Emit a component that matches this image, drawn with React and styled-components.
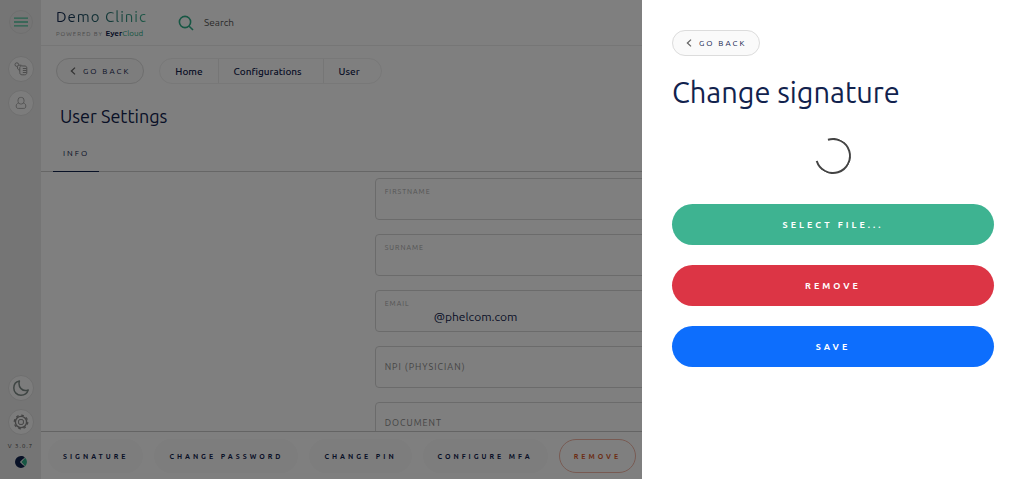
import React from 'react'
import styled, { createGlobalStyle } from 'styled-components'

const fields = [
  { id: 'firstname', label: 'FIRSTNAME', floating: true },
  { id: 'surname', label: 'SURNAME', floating: true },
  { id: 'email', label: 'EMAIL', floating: true, value: '@phelcom.com' },
  { id: 'npi', label: 'NPI (PHYSICIAN)' },
  { id: 'document', label: 'DOCUMENT' },
]

const actions = ['SIGNATURE', 'CHANGE PASSWORD', 'CHANGE PIN', 'CONFIGURE MFA']

const BackIcon = () => (
  <svg width="6" height="8" viewBox="0 0 6 8" fill="none" stroke="#666" strokeWidth="1.3" aria-hidden="true">
    <path d="M5 0.6 L1.4 4 L5 7.4" />
  </svg>
)

const SearchIcon = () => (
  <svg width="16" height="16" viewBox="0 0 16 16" fill="none" stroke="#2fae88" strokeWidth="1.6" aria-hidden="true">
    <circle cx="7" cy="7" r="5.6" />
    <path d="M11.2 11.2 L15 15" />
  </svg>
)

const MenuIcon = () => (
  <svg width="14" height="10" viewBox="0 0 14 10" stroke="#4fc59d" strokeWidth="1.3" aria-hidden="true">
    <path d="M0 1.2 H14 M0 5 H14 M0 8.8 H14" />
  </svg>
)

const ExamIcon = () => (
  <svg width="14" height="14" viewBox="0 0 14 14" fill="none" stroke="#999" strokeWidth="1" aria-hidden="true">
    <circle cx="2.8" cy="2.6" r="1.8" />
    <path d="M4.8 3.2 H7.4 M3.4 4.6 C3.4 7 4 8 5.8 8" />
    <path d="M5.8 5.6 C5.8 4 7 3.6 9 4 H11 C12.4 4.2 12.8 5 12.8 6 V10.6 C12.8 12 12 12.8 10.6 12.8 H8.2 C6.6 12.8 5.8 12 5.8 10.6 Z" />
    <path d="M8.8 6.5 H12.6 M8.8 8.5 H12.6 M8.8 10.5 H12.6" />
  </svg>
)

const UserIcon = () => (
  <svg width="12" height="14" viewBox="0 0 12 14" fill="none" stroke="#aaa" strokeWidth="1" aria-hidden="true">
    <rect x="3" y="1.4" width="6" height="6.6" rx="2.6" />
    <path d="M3.4 7 C1.8 7.6 1.2 8.6 1.2 10 C1.2 11.8 1.8 12.4 3.2 12.4 H8.8 C10.2 12.4 10.8 11.8 10.8 10 C10.8 8.6 10.2 7.6 8.6 7" />
  </svg>
)

const MoonIcon = () => (
  <svg width="16" height="16" viewBox="0 0 16 16" fill="none" stroke="#7d8a86" strokeWidth="1.5" strokeLinejoin="round" aria-hidden="true">
    <path d="M6.4 1 C2.8 1.8 0.8 4.8 0.8 8 C0.8 12 3.8 15.2 8 15.2 C11.4 15.2 14.2 13.2 15.2 10 C12.6 11 10 10.6 8 8.6 C6.2 6.8 5.6 4 6.4 1 Z" />
  </svg>
)

const GearIcon = () => (
  <svg width="16" height="16" viewBox="0 0 16 16" fill="none" stroke="#888" aria-hidden="true">
    <circle cx="8" cy="8" r="6.8" strokeWidth="1.2" strokeDasharray="2.67 2.67" />
    <circle cx="8" cy="8" r="5.6" strokeWidth="1.4" />
    <rect x="5.6" y="5.6" width="4.8" height="4.8" rx="1.4" strokeWidth="1" />
  </svg>
)

const LogoIcon = () => (
  <svg width="12" height="12" viewBox="0 0 12 12" aria-hidden="true">
    <path d="M6 0 C7.6 0 8.8 0.5 9.8 1.4 L5.2 6 L9.8 10.6 C8.8 11.5 7.6 12 6 12 A6 6 0 0 1 6 0 Z" fill="#11224d" />
    <path d="M10.2 1.8 A6 6 0 0 1 10.2 10.2 L6.4 6 Z" fill="#2fae88" />
    <path d="M8.4 3.2 L5.4 6 L8.4 8.8" fill="none" stroke="#d8e8e4" strokeWidth="1" />
  </svg>
)

const App = () => {
  return (
    <>
      <GlobalStyle />
      <Page>
        <Sidebar>
          <MenuButton type="button" aria-label="Menu"><MenuIcon /></MenuButton>
          <SideGroup>
            <SideButton type="button" aria-label="Exams"><ExamIcon /></SideButton>
            <SideButton type="button" aria-label="Patients"><UserIcon /></SideButton>
          </SideGroup>
          <SideBottom>
            <SideButton type="button" aria-label="Dark mode"><MoonIcon /></SideButton>
            <SideButton type="button" aria-label="Settings"><GearIcon /></SideButton>
          </SideBottom>
          <Version>V 3.0.7</Version>
          <LogoIcon />
        </Sidebar>

        <Main>
          <Header>
            <Brand>
              <BrandName>Demo Clinic</BrandName>
              <Powered>
                POWERED BY <strong>Eyer<span>Cloud</span></strong>
              </Powered>
            </Brand>
            <SearchLabel>
              <SearchIcon />
              <SearchInput type="text" placeholder="Search" aria-label="Search" />
            </SearchLabel>
          </Header>

          <TopRow>
            <BackButton type="button"><BackIcon />GO BACK</BackButton>
            <Breadcrumb aria-label="Breadcrumb">
              <Crumb href="#">Home</Crumb>
              <Crumb href="#">Configurations</Crumb>
              <Crumb href="#">User</Crumb>
            </Breadcrumb>
          </TopRow>

          <Title>User Settings</Title>
          <Tabs>
            <Tab type="button">INFO</Tab>
          </Tabs>

          <FormArea>
            <Form>
              {fields.map((field) => (
                <Field key={field.id}>
                  <FieldLabel htmlFor={field.id} $floating={field.floating}>{field.label}</FieldLabel>
                  {field.floating && <FieldInput id={field.id} type="text" defaultValue={field.value} />}
                  {!field.floating && <EmptyInput id={field.id} type="text" />}
                </Field>
              ))}
            </Form>
          </FormArea>

          <Footer>
            {actions.map((action) => (
              <ActionButton key={action} type="button">{action}</ActionButton>
            ))}
            <ActionButton type="button" $danger>REMOVE</ActionButton>
          </Footer>
        </Main>
      </Page>

      <Backdrop>
        <Panel role="dialog" aria-labelledby="panel-title">
          <BackButton type="button"><BackIcon />GO BACK</BackButton>
          <PanelTitle id="panel-title">Change signature</PanelTitle>
          <Spinner role="status" aria-label="Loading" />
          <PanelActions>
            <PanelButton type="button" $color="#3eb391">SELECT FILE...</PanelButton>
            <PanelButton type="button" $color="#dc3545">REMOVE</PanelButton>
            <PanelButton type="button" $color="#0d6efd">SAVE</PanelButton>
          </PanelActions>
        </Panel>
      </Backdrop>
    </>
  )
}

const GlobalStyle = createGlobalStyle`
  * {
    box-sizing: border-box;
  }
  body {
    margin: 0;
    color: #11224d;
    background: #fff;
    font-family: Ubuntu, 'Noto Sans', sans-serif;
  }
  button, input {
    font-family: inherit;
    color: inherit;
  }
  svg {
    flex-shrink: 0;
  }
`

const Page = styled.div`
  display: flex;
  height: 100vh;
`

const Sidebar = styled.aside`
  flex: 0 0 41px;
  display: flex;
  flex-direction: column;
  align-items: center;
  padding: 10px 0 11px;
  background: #ebebeb;
`

const SideButton = styled.button`
  display: flex;
  align-items: center;
  justify-content: center;
  width: 26px;
  height: 26px;
  padding: 0;
  border: 1px solid #dedede;
  border-radius: 50%;
  background: #f9f9f9;
`

const MenuButton = styled(SideButton)`
  width: 24px;
  height: 24px;
  background: transparent;
`

const SideGroup = styled.div`
  display: flex;
  flex-direction: column;
  gap: 8px;
  margin-top: 22px;
`

const SideBottom = styled(SideGroup)`
  margin-top: auto;
`

const Version = styled.small`
  margin: 6px 0;
  color: #444;
  font-size: 6px;
  line-height: 9px;
  letter-spacing: 1px;
  white-space: nowrap;
`

const Main = styled.main`
  flex: 1;
  min-width: 0;
  display: flex;
  flex-direction: column;
`

const Header = styled.header`
  display: flex;
  align-items: center;
  gap: 31px;
  height: 46px;
  padding: 0 15px;
  border-bottom: 1px solid #ededed;
`

const Brand = styled.div`
  display: flex;
  flex-direction: column;
  gap: 3px;
`

const BrandName = styled.div`
  color: transparent;
  background: linear-gradient(90deg, #11224d, #3eb391);
  background-clip: text;
  font-size: 15px;
  line-height: 18px;
  letter-spacing: 1px;
`

const Powered = styled.div`
  color: #999;
  font-size: 6px;
  line-height: 9px;
  letter-spacing: 1px;
  white-space: nowrap;
  strong {
    color: #11224d;
    font-size: 8px;
    letter-spacing: 0;
  }
  span {
    color: #2fae88;
    font-weight: 400;
  }
`

const SearchLabel = styled.label`
  display: flex;
  align-items: center;
  gap: 10px;
`

const SearchInput = styled.input`
  width: 160px;
  padding: 0;
  border: 0;
  background: none;
  font-size: 10px;
  &::placeholder {
    color: #555;
    opacity: 1;
  }
`

const TopRow = styled.div`
  display: flex;
  gap: 15px;
  padding: 12px 15px 0;
`

const BackButton = styled.button`
  display: inline-flex;
  align-items: center;
  gap: 7px;
  height: 26px;
  padding: 0 13px;
  border: 1px solid #dcdcdc;
  border-radius: 13px;
  background: #fafafa;
  font-size: 8px;
  letter-spacing: 2px;
  white-space: nowrap;
`

const Breadcrumb = styled.nav`
  display: flex;
  height: 26px;
  border: 1px solid #f0f0f0;
  border-radius: 13px;
`

const Crumb = styled.a`
  display: flex;
  align-items: center;
  padding: 0 15px;
  color: inherit;
  font-size: 10px;
  font-weight: 500;
  text-decoration: none;
  & + & {
    padding-right: 21px;
    border-left: 1px solid #ededed;
  }
`

const Title = styled.h1`
  margin: 20px 0 0 19px;
  font-size: 18px;
  font-weight: 400;
  line-height: 24px;
`

const Tabs = styled.div`
  display: flex;
  margin-top: 7px;
  padding-left: 12px;
  border-bottom: 1px solid #ccc;
`

const Tab = styled.button`
  height: 37px;
  padding: 0 10px;
  margin-bottom: -1px;
  border: 0;
  border-bottom: 1px solid #11224d;
  background: none;
  font-size: 8px;
  letter-spacing: 2px;
`

const FormArea = styled.div`
  flex: 1;
  min-height: 0;
  display: grid;
  grid-template-columns: repeat(3, 1fr);
  overflow-y: auto;
  scrollbar-width: none;
`

const Form = styled.form`
  grid-column: 2;
  display: flex;
  flex-direction: column;
  gap: 14px;
  padding: 6px;
`

const Field = styled.div`
  flex: 0 0 42px;
  display: flex;
  flex-direction: column;
  padding: 0 9px;
  border: 1px solid #d6d6d6;
  border-radius: 4px;
`

const FieldLabel = styled.label`
  color: ${(props) => (props.$floating ? '#aaa' : '#888')};
  font-size: ${(props) => (props.$floating ? '7px' : '9px')};
  line-height: ${(props) => (props.$floating ? '8px' : '40px')};
  letter-spacing: 1px;
  padding-top: ${(props) => (props.$floating ? '8px' : '0')};
`

const FieldInput = styled.input`
  width: 100%;
  height: 18px;
  padding: 0 0 0 49px;
  border: 0;
  background: none;
  font-size: 12px;
`

const EmptyInput = styled(FieldInput)`
  height: 0;
`

const Footer = styled.footer`
  display: flex;
  align-items: center;
  gap: 11px;
  height: 48px;
  padding: 0 7px;
  border-top: 1px solid #c8c8c8;
`

const ActionButton = styled.button`
  height: 34px;
  padding: 0 14px;
  border: 1px solid ${(props) => (props.$danger ? '#f0b5a5' : 'transparent')};
  border-radius: 17px;
  background: ${(props) => (props.$danger ? 'transparent' : '#fafafa')};
  color: ${(props) => (props.$danger ? '#d8592b' : '#11224d')};
  font-size: 7px;
  font-weight: 700;
  letter-spacing: 3px;
  white-space: nowrap;
`

const Backdrop = styled.div`
  position: fixed;
  inset: 0;
  display: flex;
  justify-content: flex-end;
  background: rgba(0, 0, 0, 0.5);
`

const Panel = styled.section`
  width: 382px;
  max-width: 100%;
  padding: 30px;
  background: #fff;
  overflow-y: auto;
`

const PanelTitle = styled.h2`
  margin: 16px 0 26px;
  font-size: 29px;
  font-weight: 400;
  line-height: 40px;
`

const Spinner = styled.div`
  width: 36px;
  height: 36px;
  margin: 0 auto 30px;
  border: 2px solid #444;
  border-left-color: transparent;
  border-radius: 50%;
  transform: rotate(28deg);
`

const PanelActions = styled.div`
  display: flex;
  flex-direction: column;
  gap: 20px;
`

const PanelButton = styled.button`
  height: 41px;
  border: 0;
  border-radius: 21px;
  background: ${(props) => props.$color};
  color: #fff;
  font-size: 9px;
  font-weight: 700;
  letter-spacing: 3px;
`

export default App
